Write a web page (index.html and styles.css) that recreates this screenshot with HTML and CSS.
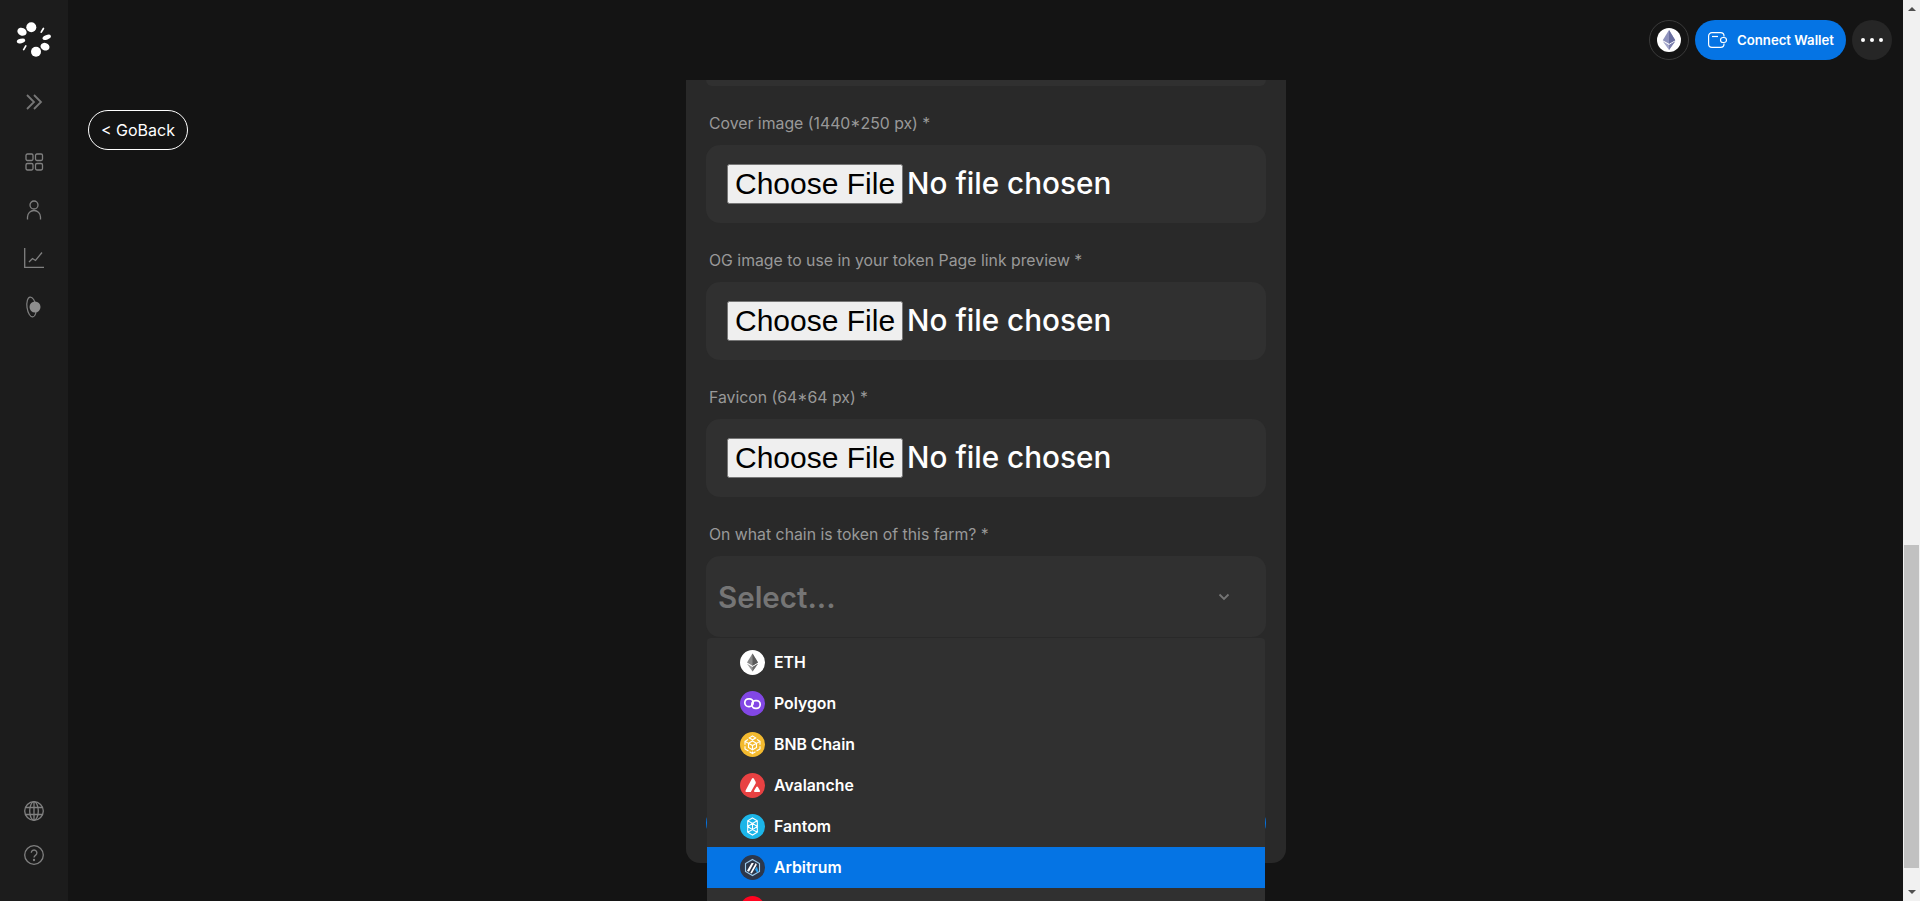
FILE: index.html
```html
<!DOCTYPE html>
<html lang="en">
<head>
<meta charset="utf-8">
<title>Create farm</title>
<link rel="stylesheet" href="styles.css">
</head>
<body>
<div class="app">
  <aside class="sidebar">
    <svg class="logo" width="36" height="36" viewBox="0 0 36 36" fill="#fff">
      <circle cx="15.300" cy="5.200" r="5"/>
      <ellipse cx="6" cy="9.700" rx="4.800" ry="3.800" transform="rotate(25 6 9.700)"/>
      <ellipse cx="5" cy="19" rx="4.300" ry="2.200" transform="rotate(-15 5 19)"/>
      <ellipse cx="30.700" cy="15.300" rx="4.400" ry="2.300" transform="rotate(-20 30.700 15.300)"/>
      <ellipse cx="29" cy="24.700" rx="4.600" ry="3.700" transform="rotate(20 29 24.700)"/>
      <circle cx="20" cy="29.700" r="5"/>
      <rect x="25.500" y="5.300" width="1.700" height="6" rx=".85" transform="rotate(30 26.300 8.300)"/>
      <rect x="7.900" y="22.700" width="1.700" height="6" rx=".85" transform="rotate(30 8.700 25.700)"/>
    </svg>
    <svg class="nav-first" width="20" height="20" viewBox="0 0 20 20" fill="none" stroke="#777" stroke-width="1.800"><path d="M3 3l7 7-7 7M10 3l7 7-7 7"/></svg>
    <nav class="nav">
      <svg width="20" height="20" viewBox="0 0 20 20" fill="none" stroke="#808080" stroke-width="1.300"><rect x="2" y="2" width="7" height="6.500" rx="1.400"/><rect x="11.500" y="2" width="7" height="6.500" rx="1.400"/><rect x="2" y="11.500" width="7" height="6.500" rx="1.400"/><rect x="11.500" y="11.500" width="7" height="6.500" rx="1.400"/></svg>
      <svg width="20" height="20" viewBox="0 0 20 20" fill="none" stroke="#808080" stroke-width="1.300"><circle cx="10" cy="5" r="4"/><path d="M3.500 19.500v-2.500a6.500 6.500 0 0 1 13 0v2.500"/></svg>
      <svg width="20" height="20" viewBox="0 0 20 20" fill="none" stroke="#808080" stroke-width="1.300"><path d="M.7 0v19.300H20"/><path d="M5 14l3.500-3.500 3 2L18 4.500"/></svg>
      <svg width="20" height="22" viewBox="0 0 20 22" fill="none"><ellipse cx="7.500" cy="11" rx="4.500" ry="10" stroke="#808080" stroke-width="1.200" transform="rotate(-8 7.500 11)"/><circle cx="11" cy="11" r="5.500" fill="#8e8e8e"/></svg>
    </nav>
    <div class="nav-bottom">
      <svg width="20" height="20" viewBox="0 0 20 20" fill="none" stroke="#808080" stroke-width="1.300"><circle cx="10" cy="10" r="9.300"/><ellipse cx="10" cy="10" rx="4.300" ry="9.300"/><path d="M1.500 6.500h17M1.500 13.500h17M10 .7v18.600"/></svg>
      <svg width="20" height="20" viewBox="0 0 20 20" fill="none" stroke="#808080" stroke-width="1.300"><circle cx="10" cy="10" r="9.300"/><path d="M7.300 7.800a2.800 2.800 0 1 1 4.400 2.300c-1 .7-1.700 1.200-1.700 2.500"/><circle cx="10" cy="15" r=".5" fill="#808080"/></svg>
    </div>
  </aside>
  <main class="main">
    <header class="topbar">
      <button class="chain-btn" type="button">
        <span class="chain-circle">
          <svg width="16" height="20" viewBox="0 0 16 24"><path fill="#8f93bd" d="M8 0l7.500 12.200L8 16.500.5 12.200z"/><path fill="#6a6fa0" d="M8 0l7.500 12.200L8 16.500z"/><path fill="#a3a6cb" d="M8 18l7.500-4.400L8 24 .5 13.600z"/><path fill="#7c80ad" d="M8 18l7.500-4.400L8 24z"/></svg>
        </span>
      </button>
      <button class="wallet-btn" type="button">
        <svg width="19" height="16" viewBox="0 0 19 16" fill="none" stroke="#fff" stroke-width="1.200"><path d="M16 4.500V4a3.400 3.400 0 0 0-3.400-3.400H4A3.400 3.400 0 0 0 .6 4v8A3.400 3.400 0 0 0 4 15.400h8.600A3.400 3.400 0 0 0 16 12v-.5"/><rect x="12.500" y="5.500" width="6" height="5" rx="2.500"/><path d="M4 4.500h6"/></svg>
        <span>Connect Wallet</span>
      </button>
      <button class="more-btn" type="button"><i></i><i></i><i></i></button>
    </header>
    <div class="content">
      <a class="goback" href="#">&lt; GoBack</a>
      <section class="card">
        <div class="field-cut"></div>
        <label class="label">Cover image (1440*250 px) *</label>
        <div class="file-box"><input class="file" type="file"></div>
        <label class="label">OG image to use in your token Page link preview *</label>
        <div class="file-box"><input class="file" type="file"></div>
        <label class="label">Favicon (64*64 px) *</label>
        <div class="file-box"><input class="file" type="file"></div>
        <label class="label">On what chain is token of this farm? *</label>
        <div class="select-wrap">
          <div class="select">
            <span class="placeholder">Select...</span>
            <svg width="12" height="8" viewBox="0 0 12 8" fill="none" stroke="#757575" stroke-width="1.800"><path d="M1.500 1.500L6 6l4.500-4.500"/></svg>
          </div>
          <ul class="menu">
            <li class="option">
              <svg class="coin" viewBox="0 0 25 25"><circle cx="12.500" cy="12.500" r="12.500" fill="#fff"/><path fill="#8a8a8a" d="M12.500 3.500l5.500 9-5.500 3.300L7 12.500z"/><path fill="#5a5a5a" d="M12.500 3.500l5.500 9-5.500 3.300z"/><path fill="#9a9a9a" d="M12.500 17l5.500-3.300-5.500 7.800L7 13.700z"/><path fill="#6a6a6a" d="M12.500 17l5.500-3.300-5.500 7.800z"/></svg>
              <span>ETH</span>
            </li>
            <li class="option">
              <svg class="coin" viewBox="0 0 25 25"><circle cx="12.500" cy="12.500" r="12.500" fill="#8247e5"/><g fill="none" stroke="#fff" stroke-width="1.700"><rect x="4.800" y="7.800" width="8.400" height="7.800" rx="3.800"/><rect x="11.800" y="9.600" width="8.400" height="7.800" rx="3.800"/></g></svg>
              <span>Polygon</span>
            </li>
            <li class="option">
              <svg class="coin" viewBox="0 0 25 25"><circle cx="12.500" cy="12.500" r="12.500" fill="#f3ba2f"/><path fill="none" stroke="#fff" stroke-width="1.100" d="M12.500 4l3.200 1.900-3.200 1.900-3.200-1.900zM8 7.500l-3 1.800v3.500M17 7.500l3 1.800v3.500M5 9.300l3 1.800M20 9.300l-3 1.800M8.500 11.200l4-2.300 4 2.300v4.300l-4 2.300-4-2.300zM8.500 11.200l4 2.300 4-2.300M12.500 13.500v4.300M5 14.300v2.700l3.500 2M20 14.300v2.700l-3.500 2M12.500 19.500v2l-3-1.700M12.500 21.500l3-1.700"/></svg>
              <span>BNB Chain</span>
            </li>
            <li class="option">
              <svg class="coin" viewBox="0 0 25 25"><circle cx="12.500" cy="12.500" r="12.500" fill="#e84142"/><path fill="#fff" d="M12 5.500c.5-.8 1.300-.8 1.800 0l1.800 3.200c.3.600.3 1.200 0 1.800L10.800 19H6.500c-.9 0-1.300-.7-.9-1.500z"/><path fill="#fff" d="M16.300 14c.4-.8 1.200-.8 1.600 0l2 3.500c.4.800 0 1.500-.8 1.500h-4c-.9 0-1.300-.7-.9-1.500z"/></svg>
              <span>Avalanche</span>
            </li>
            <li class="option">
              <svg class="coin" viewBox="0 0 25 25"><circle cx="12.500" cy="12.500" r="12.500" fill="#1cb5e8"/><path fill="none" stroke="#fff" stroke-width="1.100" d="M12.500 4l4.800 2.700v11.600L12.500 21l-4.800-2.700V6.700zM7.700 6.700l4.800 2.700 4.800-2.700M7.700 12.500l4.800-3.100 4.800 3.100-4.800 3.100zM12.500 9.400v6.200M7.700 18.300l4.800-2.700 4.800 2.700"/></svg>
              <span>Fantom</span>
            </li>
            <li class="option option-active">
              <svg class="coin" viewBox="0 0 25 25"><circle cx="12.500" cy="12.500" r="12.500" fill="#2c374b"/><path fill="none" stroke="#9dcced" stroke-width="1.100" d="M12.500 4.500l7 4v8l-7 4-7-4v-8z"/><path fill="#fff" d="M7 15.800l4.600-7.800h2.200L9 16.800zM10.300 17.800l5.500-9.800 1 1.800-5 8.800z"/><path fill="#28a0f0" d="M15 14.500l1.800-3 1.700 5-1.500.9z"/></svg>
              <span>Arbitrum</span>
            </li>
            <li class="option">
              <svg class="coin" viewBox="0 0 25 25"><circle cx="12.500" cy="12.500" r="12.500" fill="#ff0420"/></svg>
            </li>
          </ul>
        </div>
        <button class="submit" type="button"></button>
      </section>
    </div>
  </main>
  <div class="scrollbar">
    <span class="arrow-up"></span>
    <div class="track"><div class="thumb"></div></div>
    <span class="arrow-down"></span>
  </div>
</div>
</body>
</html>
```
FILE: styles.css
```css
* { box-sizing: border-box; }
html, body { margin: 0; height: 100%; overflow: hidden; background: #141414; }
body { font-family: Inter, "Noto Sans", sans-serif; color: #fff; }
button { border: 0; padding: 0; font: inherit; color: inherit; cursor: pointer; }

.app { display: flex; height: 901px; overflow: hidden; }

.sidebar { width: 68px; flex: none; background: #1c1c1c; display: flex; flex-direction: column; align-items: center; padding-top: 22px; }
.nav-first { margin-top: 34px; }
.nav { display: flex; flex-direction: column; gap: 28px; align-items: center; margin-top: 40px; }
.nav-bottom { margin-top: auto; margin-bottom: 36px; display: flex; flex-direction: column; gap: 24px; }

.main { flex: 1; min-width: 0; display: flex; flex-direction: column; }
.topbar { height: 80px; flex: none; display: flex; justify-content: flex-end; align-items: flex-start; gap: 6px; padding: 20px 11px 0 0; }
.chain-btn { width: 40px; height: 40px; border-radius: 50%; background: transparent; border: 1px solid #3a3a3a; display: flex; align-items: center; justify-content: center; }
.chain-circle { width: 24px; height: 24px; border-radius: 50%; background: #fff; display: flex; align-items: center; justify-content: center; }
.wallet-btn { width: 151px; height: 40px; border-radius: 20px; background: #0574e4; display: flex; align-items: center; gap: 10px; padding-left: 13px; font-size: 13.200px; font-weight: 600; }
.more-btn { width: 40px; height: 40px; border-radius: 50%; background: #262626; display: flex; align-items: center; justify-content: center; gap: 5px; }
.more-btn i { width: 4px; height: 4px; border-radius: 50%; background: #fff; }

.content { flex: 1; display: flex; align-items: flex-start; min-height: 0; }
.goback { margin: 30px 0 0 20px; width: 100px; height: 40px; border: 1px solid #fff; border-radius: 20px; display: flex; align-items: center; justify-content: center; color: #fff; text-decoration: none; font-size: 16px; flex: none; }

.card { margin-left: 498px; width: 600px; height: 783px; background: #292929; border-radius: 0 0 14px 14px; padding: 0 20px; display: flex; flex-direction: column; flex: none; }
.field-cut { height: 6px; background: #303030; border-radius: 0 0 14px 14px; flex: none; }
.label { display: block; height: 59px; padding-top: 28px; padding-left: 3px; font-size: 15.800px; line-height: 20px; color: #999; flex: none; }
.file-box { height: 78px; background: #303030; border-radius: 14px; padding: 0 21px; display: flex; align-items: center; flex: none; }
.file { font-family: Inter, sans-serif; font-size: 29.700px; font-weight: 500; color: #fff; width: 100%; }
.file::file-selector-button { font-family: "Liberation Sans", Arial, sans-serif; font-size: 30px; font-weight: 400; }

.select-wrap { position: relative; }
.select { height: 81px; background: #303030; border-radius: 14px; display: flex; align-items: center; justify-content: space-between; padding: 0 36px 0 12px; }
.placeholder { font-size: 29.500px; font-weight: 600; color: #757575; }
.menu { position: absolute; top: 82px; left: 1px; width: 558px; margin: 0; padding: 4px 0; list-style: none; background: #303030; border-radius: 4px; z-index: 5; }
.option { height: 41px; display: flex; align-items: center; gap: 9px; padding-left: 33px; font-size: 15.800px; font-weight: 600; }
.option span { padding-bottom: 1px; }
.option-active { background: #0574e4; }
.coin { width: 25px; height: 25px; flex: none; }

.submit { margin-top: 166px; height: 40px; border-radius: 20px; background: #0574e4; flex: none; }

.scrollbar { width: 17px; flex: none; background: #f1f1f1; display: flex; flex-direction: column; align-items: center; }
.arrow-up, .arrow-down { flex: none; width: 0; height: 0; border-left: 4px solid transparent; border-right: 4px solid transparent; }
.arrow-up { margin-top: 7px; border-bottom: 4px solid #505050; }
.arrow-down { margin-bottom: 7px; border-top: 4px solid #505050; }
.track { flex: 1; width: 100%; padding: 0 1px; }
.thumb { margin-top: 534px; height: 323px; background: #c1c1c1; }
```
